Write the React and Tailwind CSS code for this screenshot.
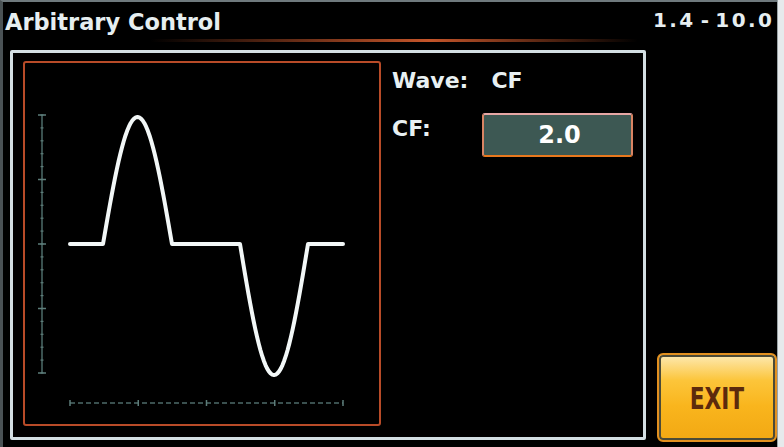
import React from "react";

// half-sine lobes on a flat baseline, in page coordinates
const buildWave = () => {
  const base = 244;
  const lobe = (x0, x1, amp, dir) => {
    const pts = [];
    const steps = 40;
    for (let i = 0; i <= steps; i++) {
      const t = i / steps;
      const x = x0 + (x1 - x0) * t;
      const y = base + dir * amp * Math.sin(Math.PI * t);
      pts.push(`${x.toFixed(2)} ${y.toFixed(2)}`);
    }
    return pts.join(" L ");
  };
  return `M 70 ${base} L ${lobe(103, 172, 127, -1)} L ${lobe(240, 308, 131, 1)} L 343 ${base}`;
};

const WaveChart = () => {
  const vMajor = [115, 179.5, 244, 308.5, 373];
  const vMinor = [];
  for (let y = 115; y <= 373; y += 12.9) vMinor.push(y);
  const hMajor = [70, 138.25, 206.5, 274.75, 343];

  return (
    <svg width="354" height="361" viewBox="25 63 354 361" className="block">
      {/* vertical axis */}
      <line x1="42" y1="115" x2="42" y2="373" stroke="#4d6b69" strokeWidth="1.5" />
      {vMinor.map((y, i) => (
        <line key={"vm" + i} x1="40.5" y1={y} x2="43.5" y2={y} stroke="#5d7d7a" strokeWidth="1.2" />
      ))}
      {vMajor.map((y, i) => (
        <line key={"vM" + i} x1="38" y1={y} x2="46" y2={y} stroke="#5d7d7a" strokeWidth="1.5" />
      ))}
      {/* horizontal axis */}
      <line x1="70" y1="403" x2="343" y2="403" stroke="#4d6b69" strokeWidth="1.5" strokeDasharray="5 3" />
      {hMajor.map((x, i) => (
        <line key={"hM" + i} x1={x} y1="400" x2={x} y2="406" stroke="#5d7d7a" strokeWidth="1.5" />
      ))}
      {/* waveform */}
      <path
        d={buildWave()}
        fill="none"
        stroke="#f2f7f7"
        strokeWidth="4"
        strokeLinecap="round"
        strokeLinejoin="round"
      />
    </svg>
  );
};

export default function App() {
  return (
    <div className="w-[784px] h-[447px] bg-black flex font-['DejaVu_Sans',sans-serif] overflow-hidden">
      <div className="w-[777px] h-full border-t-2 border-l-[3px] border-t-[#6f797d] border-l-[#4a5255] flex flex-col overflow-hidden">
        {/* header */}
        <div className="h-[37px] flex items-start pl-[2px] shrink-0">
          <div className="w-[648px] shrink-0 text-[22.5px] leading-[41px] font-bold text-[#e6eef0]">
            Arbitrary Control
          </div>
          <div className="shrink-0 flex whitespace-nowrap text-[20px] leading-[36px] font-bold tracking-[2.4px] text-[#e6eef0]">
            <span>1.4</span>
            <span className="ml-[5px]">-</span>
            <span className="ml-[4px]">10.0</span>
          </div>
        </div>
        {/* orange rule */}
        <div className="h-[3px] shrink-0 bg-linear-to-r from-transparent from-[19%] via-[#c4552a] via-[55%] to-transparent to-[82%]" />
        <div className="h-[8px] shrink-0" />

        {/* content */}
        <div className="flex flex-1 min-h-0">
          <div className="ml-[7px] w-[636px] h-[390px] border-[3px] border-[#d3dfe3] rounded-[2px] pt-[8px] pl-[10px] flex">
            <div className="w-[358px] h-[365px] border-2 border-[#b84b28] rounded-[3px]">
              <WaveChart />
            </div>
            <div className="ml-[11px] pt-[7px] flex flex-col text-[#e8f0f2] font-bold">
              <div className="flex h-[26px] text-[22px] leading-[26px]">
                <span>Wave:</span>
                <span className="ml-[23px]">CF</span>
              </div>
              <div className="flex items-start mt-[19px]">
                <span className="w-[90px] mt-[2.5px] text-[22px] leading-[26px]">CF:</span>
                <div className="w-[151px] h-[44px] rounded-[3px] border-2 border-t-[#e7a7a5] border-x-[#d98463] border-b-[#e8781e] bg-[#3d5853] flex items-center justify-center pl-[4px] text-[24px] leading-[40px] text-white">
                  2.0
                </div>
              </div>
            </div>
          </div>

          <div className="ml-[11px] w-[120px] flex flex-col justify-end pb-[5px]">
            <button className="h-[89px] w-[120px] rounded-[6px] border-2 border-[#e2901f] shadow-[inset_0_0_0_2px_#4b4a37] bg-[linear-gradient(to_bottom,#fde9b2_0%,#fcc53a_30%,#f9b51d_60%,#f2a813_100%)] flex items-center justify-center">
              <span className="inline-block scale-x-[0.7] text-[31px] leading-[34px] font-bold text-[#5c2a0c]">
                EXIT
              </span>
            </button>
          </div>
        </div>
      </div>
      <div className="w-[7px] h-full bg-[#e6eaec] border-l border-[#9aa3a6]" />
    </div>
  );
}
